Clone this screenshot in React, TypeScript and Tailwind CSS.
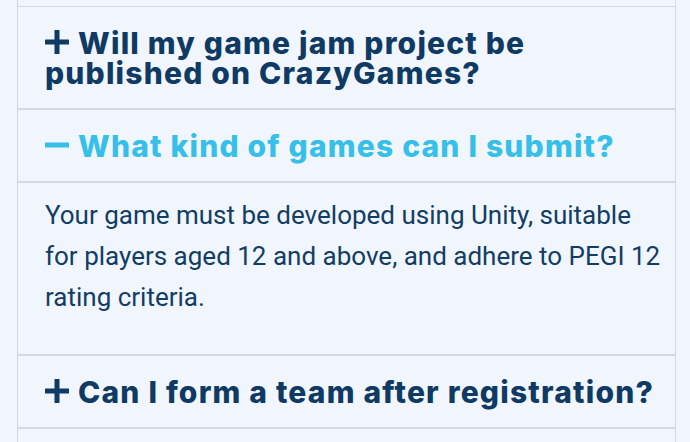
import { useState } from "react";

const faqs = [
    {
        q: "Will my game jam project be published on CrazyGames?",
        a: "",
    },
    {
        q: "What kind of games can I submit?",
        a: "Your game must be developed using Unity, suitable for players aged 12 and above, and adhere to PEGI 12 rating criteria.",
    },
    {
        q: "Can I form a team after registration?",
        a: "",
    },
    {
        q: "How will the games be judged?",
        a: "",
    },
];

const Plus = () => (
    <svg width="24" height="24" viewBox="0 0 24 24" className="mr-[9px] inline-block align-baseline" fill="currentColor">
        <rect x="0" y="9.5" width="24" height="5" rx="0.5" />
        <rect x="9.5" y="0" width="5" height="24" rx="0.5" />
    </svg>
);

const Minus = () => (
    <svg width="24" height="24" viewBox="0 0 24 24" className="mr-[9px] inline-block align-baseline" fill="currentColor">
        <rect x="0" y="9.5" width="24" height="5" rx="0.5" />
    </svg>
);

export default function App() {
    const [open, setOpen] = useState(1);

    return (
        <div className="min-h-screen bg-[#f1f6fe] pl-[17px]">
            <div className="w-[659px] border-x border-[#d3d8df]">
                <div className="h-[7px] border-b border-[#d3d8df]" />
                {faqs.map((f, i) => (
                    <div key={i} className="border-b-2 border-[#d5dae1]">
                        <button
                            onClick={() => setOpen(open === i ? -1 : i)}
                            className={
                                "block w-full pl-[27px] pr-[6px] pt-[21px] pb-[20px] text-left font-['Inter',sans-serif] text-[30px] font-extrabold leading-[30px] tracking-[1.2px] " +
                                (open === i ? "text-[#36bfe9]" : "text-[#0f3a64]")
                            }
                        >
                            {open === i ? <Minus /> : <Plus />}
                            {f.q}
                        </button>
                        {open === i && (
                            <div className="border-t-2 border-[#d5dae1] pl-[27px] pr-[8px] pt-[12px] pb-[36px]">
                                <p className="font-['Roboto',sans-serif] text-[26px] leading-[41px] text-[#123d64]">
                                    {f.a}
                                </p>
                            </div>
                        )}
                    </div>
                ))}
            </div>
        </div>
    );
}
